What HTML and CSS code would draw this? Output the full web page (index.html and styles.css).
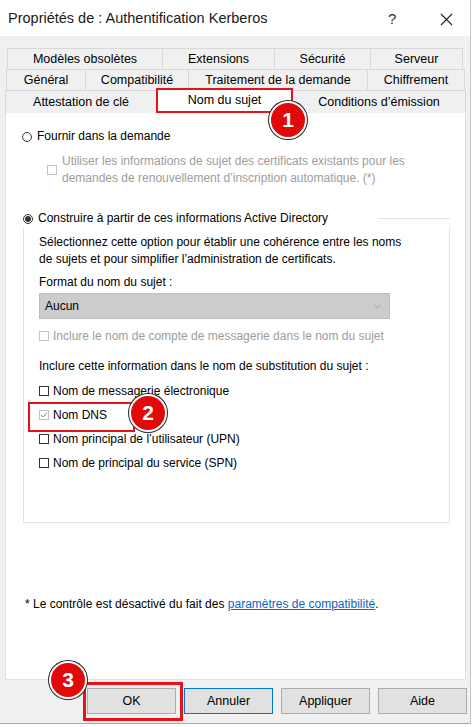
FILE: index.html
```html
<!DOCTYPE html>
<html lang="fr">
<head>
<meta charset="utf-8">
<link rel="stylesheet" href="styles.css">
</head>
<body>
<div class="window">
  <div class="titlebar">
    <span class="title">Propriétés de : Authentification Kerberos</span>
    <span class="help">?</span>
    <span class="close"><svg width="13" height="13" viewBox="0 0 13 13"><path d="M1 1 L12 12 M12 1 L1 12" stroke="#222" stroke-width="1.1" fill="none"/></svg></span>
  </div>
  <div class="main">
    <div class="tabs">
      <div class="tabrow r1">
        <div class="tab">Modèles obsolètes</div>
        <div class="tab">Extensions</div>
        <div class="tab">Sécurité</div>
        <div class="tab">Serveur</div>
      </div>
      <div class="tabrow r2">
        <div class="tab">Général</div>
        <div class="tab">Compatibilité</div>
        <div class="tab">Traitement de la demande</div>
        <div class="tab">Chiffrement</div>
      </div>
      <div class="tabrow r3">
        <div class="tab">Attestation de clé</div>
        <div class="tab sel">Nom du sujet</div>
        <div class="tab">Conditions d’émission</div>
      </div>
    </div>
    <div class="panel">
      <div class="opt first"><span class="radio"></span>Fournir dans la demande</div>
      <div class="sub disabled"><span class="box dis"></span><span>Utiliser les informations de sujet des certificats existants pour les demandes de renouvellement d’inscription automatique. (*)</span></div>
      <div class="group">
        <div class="group-head"><span class="opt"><span class="radio on"></span>Construire à partir de ces informations Active Directory</span><span class="line"></span></div>
        <div class="group-body">
          <p class="text">Sélectionnez cette option pour établir une cohérence entre les noms de sujets et pour simplifier l’administration de certificats.</p>
          <p class="label">Format du nom du sujet :</p>
          <div class="select"><span>Aucun</span><svg width="7" height="5" viewBox="0 0 7 5"><path d="M0.5 1 L3.5 4 L6.5 1" stroke="#9a9a9a" fill="none" stroke-width="0.9"/></svg></div>
          <div class="check disabled inc"><span class="box dis"></span>Inclure le nom de compte de messagerie dans le nom du sujet</div>
          <p class="label alt">Inclure cette information dans le nom de substitution du sujet :</p>
          <div class="checks">
            <div class="check"><span class="box"></span>Nom de messagerie électronique</div>
            <div class="check marked"><span class="box dis on"><svg width="8" height="8" viewBox="0 0 8 8"><path d="M1 4 L3 6 L7 1.5" stroke="#8a8a8a" stroke-width="1" fill="none"/></svg></span>Nom DNS</div>
            <div class="check"><span class="box"></span>Nom principal de l’utilisateur (UPN)</div>
            <div class="check"><span class="box"></span>Nom de principal du service (SPN)</div>
          </div>
        </div>
      </div>
      <p class="note">* Le contrôle est désactivé du fait des <a href="#">paramètres de compatibilité</a>.</p>
    </div>
    <div class="buttons">
      <button class="btn ok">OK</button>
      <button class="btn focus">Annuler</button>
      <button class="btn">Appliquer</button>
      <button class="btn">Aide</button>
    </div>
  </div>
</div>
<div class="badge b1">1</div>
<div class="badge b2">2</div>
<div class="badge b3">3</div>
</body>
</html>
```

FILE: styles.css
```css
* { box-sizing: border-box; }
html, body { margin: 0; padding: 0; background: #fff; }
body { width: 476px; height: 727px; overflow: hidden; position: relative; }

.window {
  width: 471px;
  font-family: "Liberation Sans", Arial, sans-serif;
  font-size: 12px;
  color: #000;
  border-right: 1px solid #c4c4c4;
  border-bottom: 1px solid #a8a8a8;
}

.titlebar {
  height: 36px;
  background: #fff;
  display: flex;
  align-items: center;
  padding-left: 8px;
}
.title { font-size: 14.5px; color: #1a1a1a; flex: 1; }
.help { font-size: 15px; color: #333; width: 52px; }
.close { width: 30px; display: flex; align-items: center; padding-top: 2px; }

.main {
  background: #f0f0f0;
  height: 687px;
  padding-top: 12px;
}

.tabs { padding-left: 6px; }
.tabrow { display: grid; height: 21px; }
.tabrow.r1 { grid-template-columns: 155px 112px 96px 92px; margin-left: 2px; }
.tabrow.r2 { grid-template-columns: 79px 103px 179px 97px; margin-left: 1px; }
.tabrow.r3 { grid-template-columns: 151px 136px 173px; height: 22px; }

.tab {
  border: 1px solid #d9d9d9;
  border-bottom: none;
  margin-left: -1px;
  display: flex;
  align-items: center;
  justify-content: center;
  font-size: 12.5px;
  white-space: nowrap;
  background: #f0f0f0;
}
.tab.sel {
  background: #fff;
  border: 2px solid #e5121a;
  margin-top: -2px;
  height: 25px;
  padding-bottom: 2px;
  position: relative;
  z-index: 1;
}

.panel {
  margin-left: 5px;
  width: 461px;
  height: 568px;
  background: #fff;
  border: 1px solid #e2e2e2;
  padding: 15px 0 0 16px;
}
.panel p { margin: 0; }

.opt { display: flex; align-items: center; line-height: 17px; white-space: nowrap; }
.radio {
  width: 10px; height: 10px;
  border: 1px solid #333;
  border-radius: 50%;
  margin-right: 5px;
  display: inline-flex;
  align-items: center;
  justify-content: center;
  flex: none;
}
.radio.on::before {
  content: "";
  width: 6px; height: 6px;
  border-radius: 50%;
  background: #333;
}

.disabled { color: #9d9d9d; }
.sub {
  display: flex;
  align-items: center;
  margin: 8px 0 0 25px;
  line-height: 17px;
  width: 375px;
}
.sub .box { margin-right: 5px; }

.box {
  width: 10px; height: 10px;
  border: 1px solid #333;
  margin-right: 4px;
  flex: none;
  display: inline-flex;
  align-items: center;
  justify-content: center;
}
.box.dis { border-color: #c4c4c4; }

.group {
  margin: 23px 0 0 1px;
  width: 427px;
}
.group-head { display: flex; align-items: center; }
.group-head .line { flex: 1; border-top: 1px solid #e3e3e3; margin-left: 50px; }
.group-body {
  border: 1px solid #e3e3e3;
  border-top: none;
  padding: 7px 0 47px 15px;
}
.text { line-height: 17px; width: 372px; }
.label { line-height: 17px; margin-top: 6px !important; }
.label.alt { margin-top: 14px !important; }

.select {
  margin-top: 2px;
  width: 351px;
  height: 26px;
  background: #cccccc;
  border: 1px solid #bdbdbd;
  display: flex;
  align-items: center;
  justify-content: space-between;
  padding: 0 8px 0 5px;
}

.check { display: flex; align-items: center; height: 24px; }
.check.inc { height: 17px; margin-top: 8px; }
.checks { margin-top: 4px; }
.check.marked { position: relative; }
.check.marked::after {
  content: "";
  position: absolute;
  left: -11px; top: -1px;
  width: 103px; height: 26px;
  border: 2px solid #e5121a;
}

.note { margin-top: 73px !important; line-height: 17px; margin-left: 3px !important; }
.note a { color: #0a66c8; text-decoration: underline; }

.buttons {
  display: flex;
  gap: 8px;
  padding-left: 87px;
  margin-top: 8px;
}
.btn {
  width: 89px; height: 26px;
  background: #e1e1e1;
  border: 1px solid #adadad;
  font-family: "Liberation Sans", Arial, sans-serif;
  font-size: 12.5px;
  color: #000;
  padding: 0;
}
.btn.focus { border-color: #0078d7; }
.btn.ok { position: relative; }
.btn.ok::after {
  content: "";
  position: absolute;
  left: -5px; top: -7px; right: -8px; bottom: -8px;
  border: 3px solid #e5121a;
}

.badge {
  position: absolute;
  width: 38px; height: 38px;
  border-radius: 50%;
  background: #e00a0a;
  border: 2px solid #fff;
  box-shadow: 0 0 0 1px #222;
  color: #fff;
  font-family: "Liberation Sans", Arial, sans-serif;
  font-weight: bold;
  font-size: 21px;
  display: flex;
  align-items: center;
  justify-content: center;
  z-index: 5;
}
.b1 { left: 269px; top: 101px; }
.b2 { left: 129px; top: 394px; }
.b3 { left: 49px; top: 661px; }
```
